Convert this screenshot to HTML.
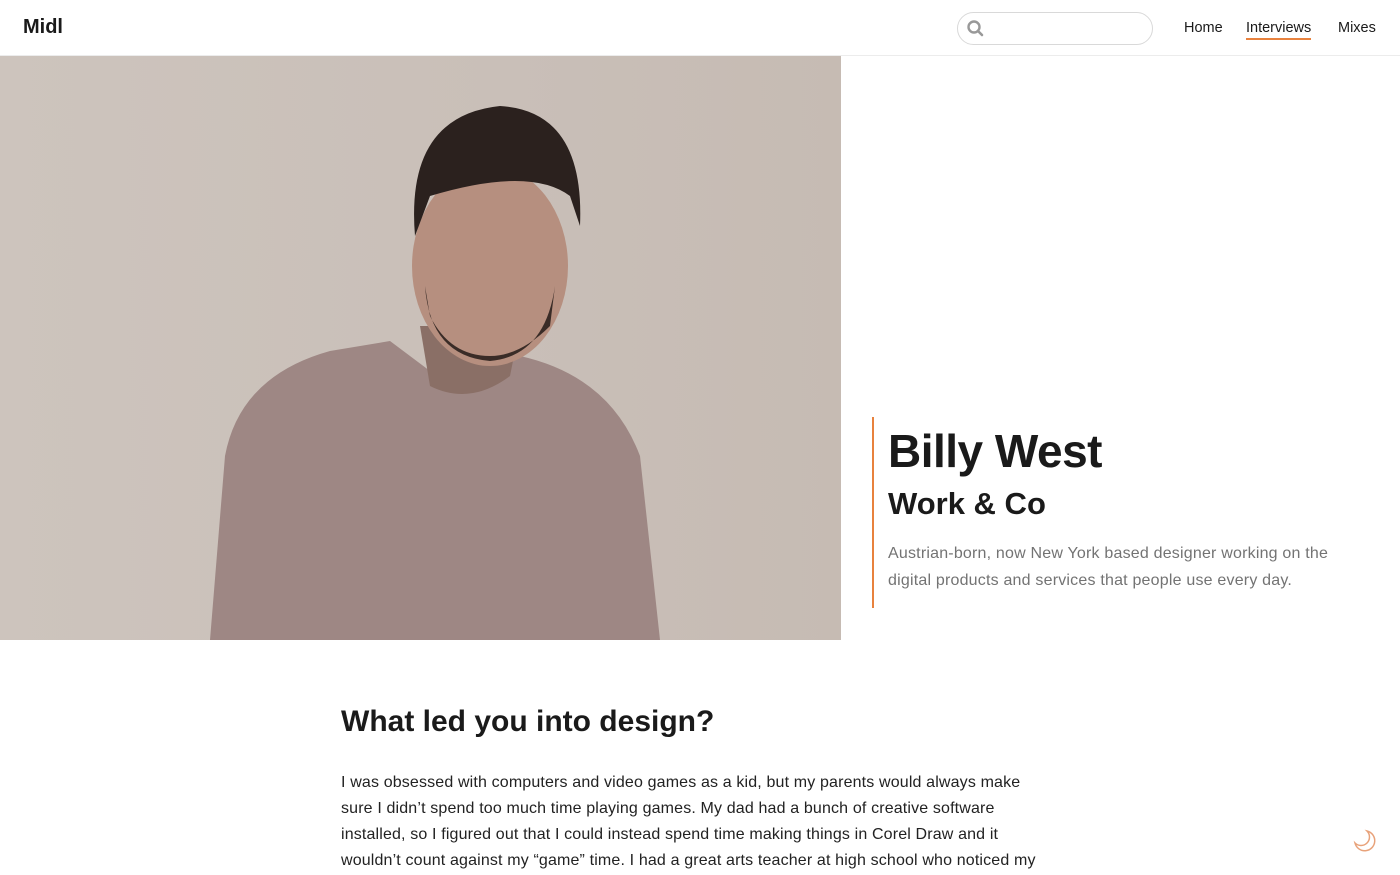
<!DOCTYPE html>
<html><head><meta charset="utf-8"><style>
*{margin:0;padding:0;box-sizing:border-box}
body{width:1400px;height:875px;overflow:hidden;background:#fff;font-family:"Liberation Sans",Arial,sans-serif;color:#1a1a1a;position:relative}
.nav{height:56px;border-bottom:1px solid #ececec;position:relative}
.logo{position:absolute;left:23px;top:16px;font-size:20px;font-weight:600}
.search{position:absolute;left:957px;top:12px;width:196px;height:33px;border:1px solid #d9d9d9;border-radius:17px}
.links{position:absolute;top:20px;font-size:14.5px}
.photo{position:absolute;left:0;top:56px;width:841px;height:584px;background:linear-gradient(90deg,#cdc4bd,#c9bfb8 60%,#c6bbb3);overflow:hidden}
.bar{position:absolute;left:872px;top:417px;width:2px;height:191px;background:#e8823e}
h1{position:absolute;left:888px;top:424px;font-size:46px;font-weight:600;letter-spacing:-0.5px}
h2{position:absolute;left:888px;top:486px;font-size:31px;font-weight:600}
.desc{position:absolute;left:888px;top:541px;font-size:16px;line-height:26.5px;color:#737373;width:470px;letter-spacing:0.2px}
h3{position:absolute;left:341px;top:705px;font-size:30px;font-weight:600}
.body{position:absolute;left:341px;top:770px;width:712px;font-size:16px;line-height:26px;color:#222;letter-spacing:0.15px}
</style></head><body>
<div class="nav">
<div class="logo">Midl</div>
<div class="search"><svg width="20" height="20" style="position:absolute;left:8px;top:6px" viewBox="0 0 20 20"><circle cx="8" cy="8" r="5.5" fill="none" stroke="#999" stroke-width="2.4"/><line x1="12" y1="12" x2="16" y2="16" stroke="#999" stroke-width="2.6" stroke-linecap="round"/></svg></div>
<div class="links" style="left:1184px">Home</div>
<div class="links" style="left:1246px;border-bottom:2px solid #e8823e;padding-bottom:2px">Interviews</div>
<div class="links" style="left:1338px">Mixes</div>
</div>
<div class="photo">
<svg width="841" height="584" viewBox="0 0 841 584">
<path d="M210 584 L225 400 Q240 320 330 295 L390 285 L450 330 L520 300 Q610 320 640 400 L660 584 Z" fill="#9e8784"/>
<path d="M420 270 L430 330 Q470 350 510 320 L520 270 Z" fill="#8a6f66"/>
<ellipse cx="490" cy="210" rx="78" ry="100" fill="#b68f7f"/>
<path d="M425 230 Q430 300 490 305 Q545 300 555 230 L550 270 Q520 300 490 300 Q450 300 430 260 Z" fill="#3a2c27"/>
<path d="M415 180 Q405 60 500 50 Q585 55 580 170 L570 140 Q530 110 430 140 Z" fill="#2b211e"/>
</svg>
</div>
<div class="bar"></div>
<h1>Billy West</h1>
<h2>Work &amp; Co</h2>
<div class="desc">Austrian-born, now New York based designer working on the digital products and services that people use every day.</div>
<h3>What led you into design?</h3>
<div class="body">I was obsessed with computers and video games as a kid, but my parents would always make sure I didn’t spend too much time playing games. My dad had a bunch of creative software installed, so I figured out that I could instead spend time making things in Corel Draw and it wouldn’t count against my “game” time. I had a great arts teacher at high school who noticed my</div>
<svg style="position:absolute;left:1352px;top:828px" width="26" height="26" viewBox="0 0 26 26"><path d="M15 3 A10 10 0 1 1 3 15 A8 8 0 0 0 15 3 Z" fill="none" stroke="#e8a27a" stroke-width="1.5"/></svg>
</body></html>
